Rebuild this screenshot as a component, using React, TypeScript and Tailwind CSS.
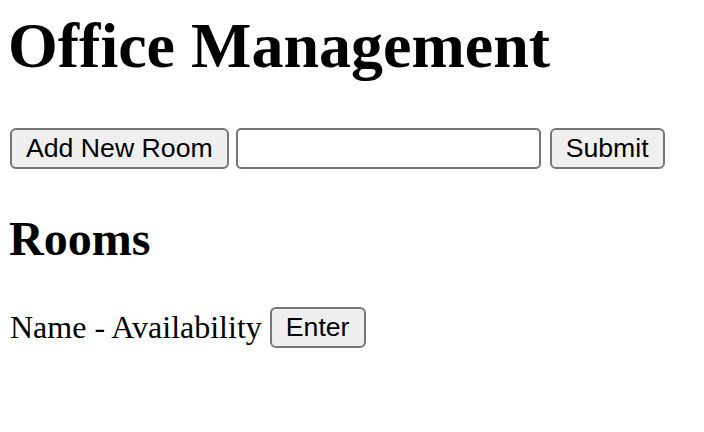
import React from "react";

const btn =
  "h-[41px] px-[14px] border-2 border-[#767676] rounded-[6px] bg-[#efefef] text-black text-[26.67px] leading-none flex items-center justify-center shrink-0";

export default function App() {
  return (
    <div
      className="w-[704px] h-[432px] bg-white text-black pl-[10px] pt-[14px] flex flex-col items-start"
      style={{ fontFamily: "'Liberation Serif', 'Times New Roman', serif" }}
    >
      <h1 className="text-[64px] leading-[64px] font-bold -ml-[2px]">Office Management</h1>
      <div
        className="mt-[50px] flex items-center"
        style={{ fontFamily: "'Liberation Sans', Arial, sans-serif" }}
      >
        <button className={btn}>Add New Room</button>
        <input
          type="text"
          className="ml-[7px] w-[305px] h-[41px] border-2 border-[#767676] rounded-[5px] bg-white outline-none px-[4px] text-[26.67px]"
        />
        <button className={btn + " ml-[9px]"}>Submit</button>
      </div>
      <h2 className="mt-[46px] text-[48px] leading-[48px] font-bold -ml-[1px]">Rooms</h2>
      <div className="mt-[44px] flex items-center">
        <span className="text-[32px] leading-[41px]">Name - Availability</span>
        <button
          className={btn + " ml-[8px]"}
          style={{ fontFamily: "'Liberation Sans', Arial, sans-serif" }}
        >
          Enter
        </button>
      </div>
    </div>
  );
}
